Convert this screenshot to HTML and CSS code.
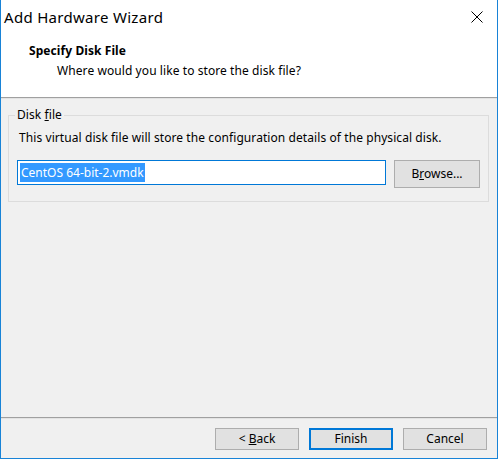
FILE: index.html
```html
<!DOCTYPE html>
<html>
	<head>
		<meta charset="UTF-8">
		<title>Add Hardware Wizard</title>
		<link rel="stylesheet" href="styles.css">
	</head>
	<body>
		<div class="window">
			<div class="titlebar">
				<span class="title">Add Hardware Wizard</span>
				<svg class="close" width="12" height="12" viewBox="0 0 12 12">
					<path d="M0.5 0.5 L11.5 11.5 M11.5 0.5 L0.5 11.5" stroke="#000" stroke-width="1" fill="none"/>
				</svg>
			</div>
			<div class="header">
				<h1>Specify Disk File</h1>
				<p>Where would you like to store the disk file?</p>
			</div>
			<hr class="etched">
			<main class="content">
				<fieldset class="group">
					<legend>Disk <u>f</u>ile</legend>
					<p class="desc">This virtual disk file will store the configuration details of the physical disk.</p>
					<div class="row">
						<div class="field"><span class="sel">CentOS 64-bit-2.vmdk</span></div>
						<button class="btn browse" type="button">B<u>r</u>owse...</button>
					</div>
				</fieldset>
			</main>
			<hr class="etched">
			<footer class="buttons">
				<button class="btn" type="button">&lt; <u>B</u>ack</button>
				<button class="btn default" type="button">Finish</button>
				<button class="btn" type="button">Cancel</button>
			</footer>
		</div>
	</body>
</html>
```

FILE: styles.css
```css
* {
	font-family: "Segoe UI", "Noto Sans", sans-serif;
	box-sizing: border-box;
}
html, body {
	margin: 0;
	padding: 0;
	background: #fff;
}
body {
	font-size: 12px;
	letter-spacing: 0.08px;
	color: #000;
}

.window {
	display: flex;
	flex-direction: column;
	width: 498px;
	height: 459px;
	border: 1px solid #1883d7;
	border-top: none;
	background: #f0f0f0;
}

.titlebar {
	display: flex;
	align-items: center;
	justify-content: space-between;
	height: 34px;
	padding: 0 14px 0 3px;
	background: #fff;
}
.title {
	font-size: 15px;
	letter-spacing: 0.3px;
	line-height: 34px;
}
.close {
	display: block;
}

.header {
	height: 63px;
	padding: 9px 0 0 28px;
	background: #fff;
}
.header h1 {
	margin: 0;
	font-size: 12px;
	font-weight: bold;
	line-height: 16px;
}
.header p {
	margin: 4px 0 0 28px;
	line-height: 16px;
}

hr.etched {
	flex: none;
	margin: 0;
	height: 2px;
	border: none;
	border-top: 1px solid #a0a0a0;
	border-bottom: 1px solid #e3e3e3;
}

.content {
	flex: 1;
	padding: 8px 8px 0 7px;
}

.group {
	margin: 0;
	padding: 0 8px 13px 8px;
	border: 1px solid #dcdcdc;
	min-width: 0;
}
.group legend {
	padding: 0 2px;
	margin-left: -2px;
	line-height: 16px;
}
.desc {
	margin: 7px 0 0 2px;
	line-height: 16px;
}
.row {
	display: flex;
	align-items: flex-start;
	gap: 8px;
	margin-top: 14px;
}
.field {
	width: 369px;
	height: 25px;
	border: 1px solid #0078d7;
	background: #fff;
	padding: 2px 0 0 2px;
	line-height: 19px;
	letter-spacing: 0;
}
.sel {
	display: inline-block;
	background: #3399ff;
	color: #fff;
	padding: 0 1px;
}

.btn {
	height: 22px;
	width: 84px;
	padding: 0;
	border: 1px solid #adadad;
	background: #e1e1e1;
	font-size: 12px;
	line-height: 18px;
	color: #000;
}
.browse {
	height: 28px;
	width: 86px;
}
.default {
	border: 2px solid #0078d7;
}

.buttons {
	display: flex;
	justify-content: flex-end;
	gap: 10px;
	height: 39px;
	padding: 9px 10px 0 0;
}
```
